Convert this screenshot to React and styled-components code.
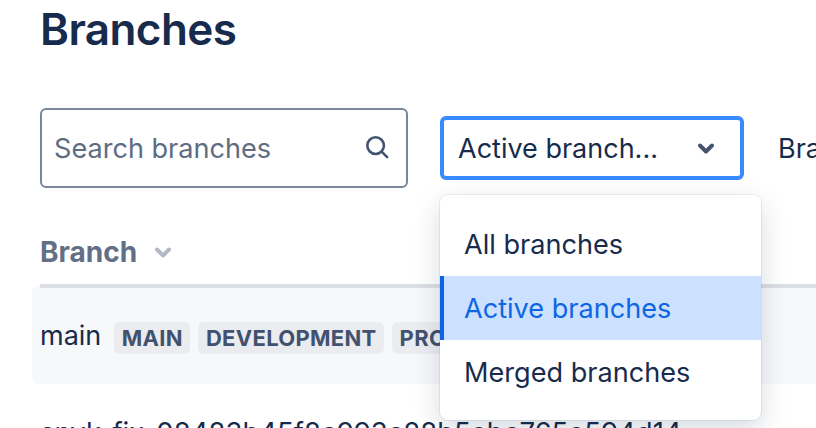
import React from 'react';
import styled, { createGlobalStyle } from 'styled-components';

const Global = createGlobalStyle`
  html, body { margin: 0; padding: 0; background: #fff; }
  body { width: 816px; height: 428px; overflow: hidden; font-family: Inter, "Noto Sans", sans-serif; color: #172b4d; }
`;
const Page = styled.div`
  width: 816px; height: 428px; overflow: hidden; padding-left: 40px; box-sizing: border-box;
`;
const Title = styled.h1`
  margin: 0; height: 108px; font-size: 44px; line-height: 58px; font-weight: 600; letter-spacing: -0.6px; color: #172b4d;
`;
const Toolbar = styled.div`
  display: flex; align-items: center; height: 80px; white-space: nowrap;
`;
const Search = styled.div`
  box-sizing: border-box; width: 368px; height: 80px; border: 2px solid #7a869a; border-radius: 6px;
  display: flex; align-items: center; justify-content: space-between; padding: 0 17px 0 12px;
  font-size: 27.1px; color: #5e6c84; flex: none;
`;
const SearchGlyph = styled.svg`
  margin-bottom: 2px; flex: none;
`;
const SelectBox = styled.div`
  box-sizing: border-box; position: relative; margin-left: 32px; width: 304px; height: 64px; flex: none;
  border: 4px solid #388bff; border-radius: 6px; display: flex; align-items: center; justify-content: space-between;
  padding: 0 22px 0 14px; font-size: 27px;
`;
const Menu = styled.div`
  position: absolute; z-index: 2; left: -4px; top: 75px; width: 321px; box-sizing: border-box; height: 225px;
  background: #fff; border-radius: 8px; padding: 17px 0;
  box-shadow: 0 0 0 1px rgba(9,30,66,.07), 0 10px 28px rgba(9,30,66,.16);
`;
const Option = styled.div`
  height: 64px; display: flex; align-items: center; font-size: 27.1px; padding-left: ${p => p.$active ? 20 : 24}px;
  color: ${p => p.$active ? '#0c66e4' : '#172b4d'};
  background: ${p => p.$active ? '#cce0ff' : 'transparent'};
  border-left: ${p => p.$active ? '4px solid #0c66e4' : '0'};
`;
const NextLabel = styled.span`
  margin-left: 34px; font-size: 27px;
`;
const HeaderRow = styled.div`
  position: relative; z-index: 1; height: 100px; box-sizing: border-box; border-bottom: 4px solid #dcdfe4; display: flex; align-items: center; gap: 14px;
  font-size: 28px; font-weight: 700; color: #626f86; padding-top: 32px; width: 800px;
`;
const Row = styled.div`
  margin: -2px 0 0 -8px; padding: 6px 0 0 8px; box-sizing: border-box; height: 98px; width: 800px; background: #f7f8f9; border-radius: 6px;
  display: flex; align-items: center; gap: 8px; font-size: 27px; white-space: nowrap;
`;
const Badge = styled.span`
  background: #ebecf0; color: #42526e; border-radius: 6px; font-size: 22px; font-weight: 700; height: 32px; padding: 0 7.5px;
  display: inline-flex; align-items: center; letter-spacing: .3px;
`;
const BranchName = styled.span`margin-right: 5px; position: relative; top: -3px;`;
const NextRow = styled.div`
  margin-top: 31px; font-size: 27.5px; white-space: nowrap;
`;

const Chevron = ({ color, size }) => (
  <svg width={size} height={size} viewBox="0 0 24 24" fill="none" stroke={color} strokeWidth="4" strokeLinecap="round" strokeLinejoin="round"><path d="M6 9.5l6 6 6-6" /></svg>
);
const SearchIcon = () => (
  <SearchGlyph width="24" height="24" viewBox="0 0 26 26" fill="none" stroke="#44546f" strokeWidth="2.8" strokeLinecap="round"><circle cx="11.5" cy="11.5" r="9" /><path d="M18 18l6 6" /></SearchGlyph>
);

export default function App() {
  return (
    <Page>
      <Global />
      <Title>Branches</Title>
      <Toolbar>
        <Search>Search branches<SearchIcon /></Search>
        <SelectBox>
          Active branch...
          <Chevron color="#44546f" size={24} />
          <Menu>
            <Option>All branches</Option>
            <Option $active>Active branches</Option>
            <Option>Merged branches</Option>
          </Menu>
        </SelectBox>
        <NextLabel>Branch</NextLabel>
      </Toolbar>
      <HeaderRow>Branch <Chevron color="#b3b9c4" size={24} /></HeaderRow>
      <Row>
        <BranchName>main</BranchName>
        <Badge>MAIN</Badge>
        <Badge>DEVELOPMENT</Badge>
        <Badge>PRODUCTION</Badge>
      </Row>
      <NextRow>snyk-fix-08483b45f8c993c28b5ebc765e594d14</NextRow>
    </Page>
  );
}
